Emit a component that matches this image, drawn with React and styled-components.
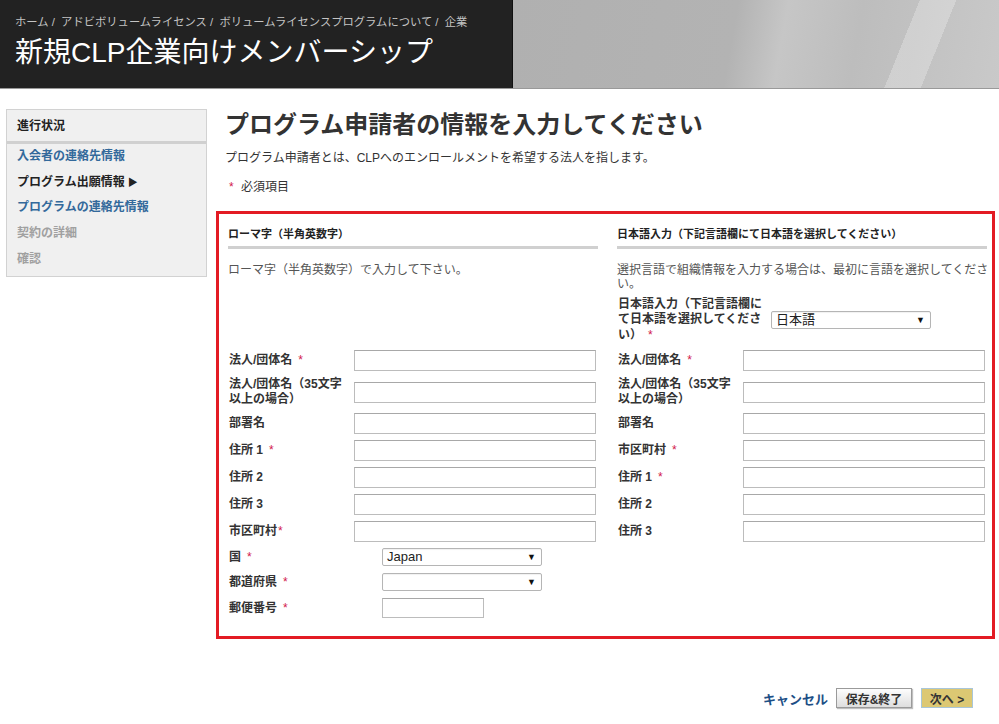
import React from "react";
import styled, { createGlobalStyle } from "styled-components";

const Global = createGlobalStyle`
  html, body { margin: 0; padding: 0; background: #fff; }
  body {
    font-family: "Liberation Sans", Arial, "Noto Sans CJK JP", sans-serif;
    font-size: 12px;
    color: #333;
  }
  * { box-sizing: border-box; }
`;

const Page = styled("div")`
  width: 999px;
  min-height: 724px;
`;

const Header = styled("header")`
  display: flex;
  height: 89px;
  border-bottom: 1px solid #999;
`;

const HeaderDark = styled("div")`
  width: 513px;
  background: #222;
  border-right: 1px solid #111;
  padding: 13px 0 0 15px;
`;

const HeaderPhoto = styled("div")`
  flex: 1;
  background:
    linear-gradient(112deg, transparent 0 78%, rgba(255,255,255,0.25) 78% 85%, transparent 85%),
    linear-gradient(100deg, #b0b0b0 0%, #b3b3b3 45%, #c6c6c6 55%, #bdbdbd 70%, #c9c9c9 100%);
`;

const Crumbs = styled("div")`
  font-size: 11.3px;
  color: #c4c4c4;
  line-height: 18px;
`;

const HeaderTitle = styled("h1")`
  margin: 5px 0 0;
  font-size: 28px;
  font-weight: 400;
  color: #fff;
  line-height: 34px;
`;

const Body = styled("div")`
  display: flex;
  align-items: flex-start;
  gap: 9px;
  padding: 20px 0 0 6px;
`;

const Side = styled("nav")`
  width: 201px;
  background: #f0f0f0;
  border: 1px solid #d2d2d2;
  padding-bottom: 3px;
`;

const SideHead = styled("div")`
  font-weight: 700;
  color: #222;
  padding: 8px 10px 7px;
  border-bottom: 3px solid #d0d0d0;
  line-height: 16px;
`;

const SideItem = styled("div")`
  padding: 0 10px;
  line-height: 25.7px;
  font-weight: 700;
  color: ${p => (p.$state === "current" ? "#222" : p.$state === "off" ? "#a0a0a0" : "#33699b")};
`;

const Pointer = styled("span")`
  font-size: 10px;
  margin-left: 3px;
`;

const Main = styled("main")`
  width: 779px;
`;

const Title = styled("h2")`
  margin: 0;
  padding-left: 9px;
  font-size: 24px;
  font-weight: 700;
  color: #333;
  line-height: 32px;
`;

const Lead = styled("p")`
  margin: 8px 0 0;
  padding-left: 9px;
  line-height: 18px;
`;

const Note = styled("p")`
  margin: 11px 0 0;
  padding-left: 9px;
  line-height: 18px;
`;

const Req = styled("span")`
  color: #d2194b;
  margin: 0 4px 0 ${p => p.$gap || 4}px;
  font-weight: 400;
`;

const FormBox = styled("section")`
  margin-top: 15px;
  border: 3px solid #e31b23;
  padding: 13px 0 18px 9px;
  display: grid;
  grid-template-columns: 370px 375px;
  column-gap: 19px;
`;

const Col = styled("div")``;

const ColHead = styled("div")`
  font-size: 11px;
  font-weight: 700;
  color: #222;
  padding-bottom: 5px;
  border-bottom: 3px solid #d0d0d0;
  width: 370px;
  line-height: 14px;
`;

const Intro = styled("div")`
  min-height: ${p => p.$min || 0}px;
  padding-top: 14px;
  color: #555;
  line-height: 14px;
`;

const Row = styled("div")`
  display: grid;
  grid-template-columns: ${p => p.$label || 126}px auto;
  align-items: center;
  margin-bottom: ${p => (p.$gap ?? 6)}px;
  min-height: ${p => p.$h || 21}px;
`;

const Label = styled("label")`
  font-weight: 700;
  color: #333;
  line-height: ${p => p.$lh || 15}px;
  padding-left: 1px;
`;

const TextBox = styled("input")`
  width: ${p => p.$w || 242}px;
  height: 21px;
  border: 1px solid #bcbcbc;
  border-top-color: #a8a8a8;
  margin: 0;
  font: inherit;
`;

const SelectWrap = styled("div")`
  position: relative;
  width: 160px;
  height: 18px;
  border: 1px solid #b5b5b5;
  border-radius: 2px;
  background: #fff;
  font-size: 13px;
  color: #222;
  line-height: 16px;
  padding-left: 4px;
  box-shadow: inset 0 1px 1px rgba(0,0,0,0.06);
`;

const Arrow = styled("span")`
  position: absolute;
  right: 5px;
  top: 0;
  font-size: 9px;
  color: #111;
`;

const Actions = styled("div")`
  display: flex;
  justify-content: flex-end;
  align-items: center;
  gap: 8px;
  padding: 49px 22px 0 0;
`;

const Cancel = styled("a")`
  color: #1d4f86;
  font-size: 13px;
  font-weight: 700;
`;

const Btn = styled("button")`
  font: inherit;
  font-size: 12px;
  font-weight: 700;
  height: 20px;
  padding: 0;
  width: ${p => p.$w}px;
  color: #333;
  border: 1px solid ${p => (p.$primary ? "#a9c6d8" : "#9a9a9a")};
  background: ${p => (p.$primary ? "#dcc873" : "linear-gradient(#fdfdfd, #dedede)")};
  box-shadow: ${p => (p.$primary ? "none" : "1px 1px 1px rgba(0,0,0,0.25)")};
  margin-left: ${p => (p.$primary ? 1 : 0)}px;
`;

function Select({ value }) {
  return (
    <SelectWrap>
      {value}
      <Arrow>▼</Arrow>
    </SelectWrap>
  );
}

const leftRows = [
  { label: "法人/団体名", req: true },
  { label: ["法人/団体名（35文字", "以上の場合）"] },
  { label: "部署名" },
  { label: "住所 1", req: true },
  { label: "住所 2" },
  { label: "住所 3" },
  { label: "市区町村", req: true, tight: true },
];

const rightRows = [
  { label: "法人/団体名", req: true },
  { label: ["法人/団体名（35文字", "以上の場合）"] },
  { label: "部署名" },
  { label: "市区町村", req: true },
  { label: "住所 1", req: true },
  { label: "住所 2" },
  { label: "住所 3" },
];

function Rows({ rows }) {
  return rows.map((r, i) => (
    <Row key={i} $h={Array.isArray(r.label) ? 30 : 21}>
      <Label>
        {Array.isArray(r.label) ? (
          <>
            {r.label[0]}
            <br />
            {r.label[1]}
          </>
        ) : (
          r.label
        )}
        {r.req && <Req $gap={r.tight ? 1 : 6}>*</Req>}
      </Label>
      <TextBox />
    </Row>
  ));
}

export default function App() {
  return (
    <Page>
      <Global />
      <Header>
        <HeaderDark>
          <Crumbs>ホーム /&nbsp; アドビボリュームライセンス /&nbsp; ボリュームライセンスプログラムについて /&nbsp; 企業</Crumbs>
          <HeaderTitle>新規CLP企業向けメンバーシップ</HeaderTitle>
        </HeaderDark>
        <HeaderPhoto />
      </Header>

      <Body>
        <Side>
          <SideHead>進行状況</SideHead>
          <SideItem>入会者の連絡先情報</SideItem>
          <SideItem $state="current">
            プログラム出願情報<Pointer>▶</Pointer>
          </SideItem>
          <SideItem>プログラムの連絡先情報</SideItem>
          <SideItem $state="off">契約の詳細</SideItem>
          <SideItem $state="off">確認</SideItem>
        </Side>

        <Main>
          <Title>プログラム申請者の情報を入力してください</Title>
          <Lead>プログラム申請者とは、CLPへのエンロールメントを希望する法人を指します。</Lead>
          <Note>
            <Req $gap={0}>*</Req> 必須項目
          </Note>

          <FormBox>
            <Col>
              <ColHead>ローマ字（半角英数字）</ColHead>
              <Intro $min={101}>ローマ字（半角英数字）で入力して下さい。</Intro>
              <Rows rows={leftRows} />
              <Row $label={154} $h={18} $gap={7}>
                <Label>国<Req $gap={6}>*</Req></Label>
                <Select value="Japan" />
              </Row>
              <Row $label={154} $h={18} $gap={7}>
                <Label>都道府県<Req $gap={6}>*</Req></Label>
                <Select value="" />
              </Row>
              <Row $label={154} $h={20} $gap={0}>
                <Label>郵便番号<Req $gap={6}>*</Req></Label>
                <TextBox $w={102} style={{ height: 20 }} />
              </Row>
            </Col>

            <Col>
              <ColHead>日本語入力（下記言語欄にて日本語を選択してください）</ColHead>
              <Intro>選択言語で組織情報を入力する場合は、最初に言語を選択してください。</Intro>
              <Row $label={154} $h={48} style={{ marginTop: 5 }}>
                <Label $lh={15.5}>
                  日本語入力（下記言語欄に
                  <br />
                  て日本語を選択してくださ
                  <br />
                  い）<Req $gap={6}>*</Req>
                </Label>
                <Select value="日本語" />
              </Row>
              <Rows rows={rightRows} />
            </Col>
          </FormBox>

          <Actions>
            <Cancel>キャンセル</Cancel>
            <Btn $w={76}>保存&amp;終了</Btn>
            <Btn $w={52} $primary>次へ &gt;</Btn>
          </Actions>
        </Main>
      </Body>
    </Page>
  );
}
